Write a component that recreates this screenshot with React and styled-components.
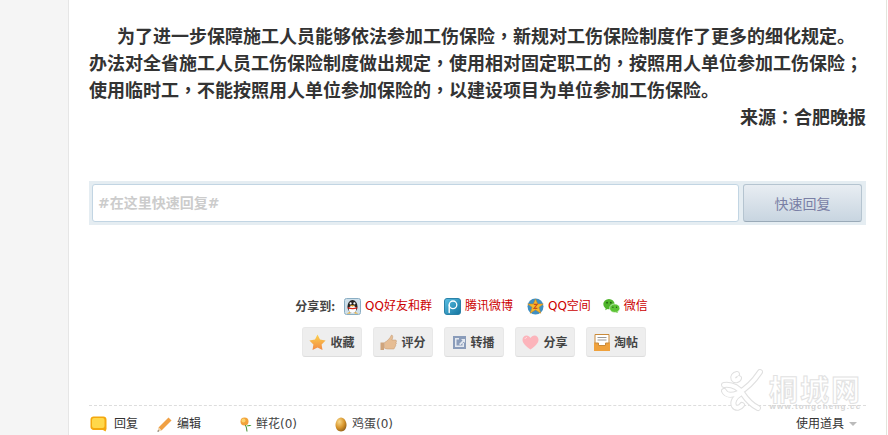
import React from "react";
import styled, { createGlobalStyle } from "styled-components";

const Global = createGlobalStyle`
  html, body { margin: 0; padding: 0; background: #fff; overflow: hidden; }
  body { font-family: "Liberation Sans", "Noto Sans CJK SC", sans-serif; }
`;
const Page = styled.div`
  position: relative; display: flex; width: 888px; height: 435px; overflow: hidden; background: #fff;
`;
const Side = styled.div`
  width: 68px; flex: none; background: #f5f5f5; border-right: 1px solid #e6e6e6;
`;
const Main = styled.div`
  width: 818px; flex: none; box-sizing: border-box; padding: 22px 20px 0 20px; border-right: 1px solid #e4e4dc;
`;
const Article = styled.div`
  font: bold 18px/27px "Noto Sans CJK SC", sans-serif; color: #333; height: 159px; white-space: nowrap;
`;
const Para = styled.p`
  margin: 0; text-indent: ${(p) => p.$indent || 0}px; text-align: ${(p) => p.$align || "left"};
`;
const Punct = styled.span`
  font-family: "Noto Sans CJK TC", sans-serif;
`;
const ReplyBox = styled.div`
  display: flex; gap: 4px; height: 44px; box-sizing: border-box; padding: 3px 4px 3px 3px; background: #e5edf2;
`;
const ReplyInput = styled.div`
  flex: 1; height: 38px; box-sizing: border-box; background: #fff; border: 1px solid #c2d5e3; border-radius: 3px;
  padding-left: 5px; font: bold 14px/36px "DejaVu Sans", "Noto Sans CJK SC", sans-serif; color: #ccc;
`;
const ReplyButton = styled.div`
  width: 119px; height: 38px; box-sizing: border-box; border: 1px solid #b5c4d0; border-bottom-color: #9aaab8; border-radius: 3px;
  background: linear-gradient(#e8edf2, #c8d5e0); text-align: center;
  font: 14px/36px "Noto Sans CJK SC", sans-serif; color: #7a7fa5;
`;
const ShareRow = styled.div`
  display: flex; justify-content: center; align-items: center; margin-top: 71px; height: 20px; padding-right: 12px;
  font: 12px/20px "DejaVu Sans", "Noto Sans CJK SC", sans-serif;
`;
const ShareLabel = styled.span`
  font-weight: bold; color: #444; margin-right: 9px; font-family: "Noto Sans CJK SC", sans-serif;
`;
const ShareLink = styled.span`
  display: inline-flex; align-items: center; gap: 4px; color: #c00; margin-right: ${(p) => p.$gap ?? 14}px;
`;
const Actions = styled.div`
  display: flex; justify-content: center; gap: 11px; margin-top: 11px; padding-right: 7px;
`;
const ActionBtn = styled.div`
  width: 60px; height: 30px; box-sizing: border-box; display: flex; align-items: center; justify-content: center; gap: 4px;
  background: #eee; border: 1px solid #e8e8e8; border-bottom-color: #ddd; border-radius: 3px;
  font: bold 12px/28px "Noto Sans CJK SC", sans-serif; color: #444;
`;
const Footer = styled.div`
  margin-top: 48px; border-top: 1px dashed #ddd; display: flex; align-items: center; height: 36px; padding-left: 1px;
  font: 12px/20px "DejaVu Sans", "Noto Sans CJK SC", sans-serif; color: #333;
`;
const FootItem = styled.span`
  display: inline-flex; align-items: center; gap: ${(p) => p.$gap ?? 3}px; width: ${(p) => p.$w}px; flex: none;
  color: ${(p) => p.$muted ? "#444" : "#333"};
`;
const Tools = styled.span`
  margin-left: auto; margin-right: 9px; display: inline-flex; align-items: center; gap: 5px; color: #333;
`;
const Caret = styled.i`
  width: 0; height: 0; border: 4px solid transparent; border-top-color: #bbb; border-bottom: 0;
`;
const Watermark = styled.div`
  position: absolute; left: 721px; top: 369px; width: 150px; height: 46px; display: flex; gap: 6px; pointer-events: none;
`;
const MarkText = styled.div`
  display: flex; flex-direction: column; align-items: center; margin-top: 4px;
`;
const MarkName = styled.span`
  font: bold 29px/30px "Noto Sans CJK SC", sans-serif; letter-spacing: 2px; color: #fff; -webkit-text-stroke: 1px #e2e2e2;
`;
const MarkUrl = styled.span`
  font: bold 8px/8px "Liberation Sans", sans-serif; letter-spacing: 1.200px; color: #d4d4d4;
`;

const Qq = () => (
  <svg width="17" height="17" viewBox="0 0 17 17">
    <rect x=".5" y=".5" width="16" height="16" rx="2" fill="#cfe0ea" stroke="#8aaec4" />
    <ellipse cx="8.500" cy="8.500" rx="5" ry="6.500" fill="#222" />
    <ellipse cx="8.500" cy="11.300" rx="3.600" ry="3.600" fill="#fff" />
    <circle cx="6.600" cy="5.400" r="1.100" fill="#fff" /><circle cx="10.400" cy="5.400" r="1.100" fill="#fff" />
    <path d="M5.600 7.200h5.800l-2.900 1.600z" fill="#f0a91e" />
    <path d="M3.800 9c3 1.200 6.400 1.200 9.400 0v1.500c-3 1-6.400 1-9.400 0z" fill="#d8261c" />
    <path d="M2.500 15.500l3.500-1.600.5 1.600zM14.500 15.500l-3.500-1.600-.5 1.600z" fill="#f0a91e" />
  </svg>
);
const Tqq = () => (
  <svg width="17" height="17" viewBox="0 0 17 17">
    <defs><linearGradient id="tq" x1="0" y1="0" x2="1" y2="1"><stop offset="0" stopColor="#5cc0e4" /><stop offset="1" stopColor="#12749f" /></linearGradient></defs>
    <rect width="16" height="16" x=".5" y=".5" rx="2.500" fill="url(#tq)" stroke="#2a82a8" />
    <circle cx="9" cy="6.800" r="3.800" fill="none" stroke="#fff" strokeWidth="1.300" />
    <path d="M5.200 14.500V7" stroke="#fff" strokeWidth="1.400" fill="none" strokeLinecap="round" />
  </svg>
);
const Zone = () => (
  <svg width="17" height="17" viewBox="0 0 17 17">
    <circle cx="8.500" cy="8.500" r="8" fill="#3f8fc2" />
    <path d="M8.500 1l2.200 5h5.600l-4.400 3.300 1.800 6-5.200-3.500-5.200 3.500 1.800-6L.7 6h5.600z" fill="#f6b92c" stroke="#d8860e" strokeWidth=".5" />
    <path d="M6.800 6.400h3.400L7 10.400h3.400" fill="none" stroke="#c9501a" strokeWidth="1.100" />
  </svg>
);
const Wechat = () => (
  <svg width="17" height="16" viewBox="0 0 18 16">
    <ellipse cx="6.300" cy="6" rx="6" ry="5.500" fill="#4fb52b" />
    <path d="M3 9.500l-.6 3 3-1.800z" fill="#4fb52b" />
    <ellipse cx="12.400" cy="10.300" rx="5.400" ry="4.500" fill="#5cc334" stroke="#fff" strokeWidth=".6" />
    <path d="M15 13.500l.8 2-2.600-1.200z" fill="#5cc334" />
    <circle cx="4.300" cy="4.500" r=".9" fill="#1d5a10" /><circle cx="8.300" cy="4.500" r=".9" fill="#1d5a10" />
    <circle cx="10.500" cy="9.300" r=".7" fill="#1d5a10" /><circle cx="14.300" cy="9.300" r=".7" fill="#1d5a10" />
  </svg>
);
const Star = () => (
  <svg width="17" height="16" viewBox="0 0 17 16">
    <defs><linearGradient id="st" x1="0" y1="0" x2="0" y2="1"><stop offset="0" stopColor="#fcd24e" /><stop offset="1" stopColor="#f28a44" /></linearGradient></defs>
    <path d="M8.500.5l2.500 5.100 5.600.8-4 4 .9 5.600-5-2.600-5 2.600.9-5.600-4-4 5.600-.8z" fill="url(#st)" />
  </svg>
);
const Thumb = () => (
  <svg width="17" height="17" viewBox="0 0 17 17">
    <path d="M.5 8.500H4v7.500H.5z" fill="#cfa47c" />
    <path d="M4.500 8.500c2.500-1.200 5.500-4 7-7.500 1.600.2 1.600 2.500.4 5h3.400c1.400 0 1.600 1.700.6 2.200.8.800.6 2-.4 2.400.5 1 .2 2-.8 2.300.2 1.200-.5 2.100-1.600 2.100H7.500c-1.300 0-2-.5-3-.8z" fill="#e6bd94" stroke="#c0956c" strokeWidth=".5" />
  </svg>
);
const Repost = () => (
  <svg width="13" height="13" viewBox="0 0 13 13">
    <path d="M0 0h13v13H0z" fill="#8a9cba" />
    <path d="M2 2h4v1.500H3.500v6h6V7H11v4H2z" fill="#e3e8ef" />
    <path d="M6 8l3.500-3.500L8 3h4v4l-1.200-1.200L7.300 9.200z" fill="#e3e8ef" />
  </svg>
);
const Heart = () => (
  <svg width="17" height="15" viewBox="0 0 17 15">
    <path d="M8.500 14.500C3.500 10.800.5 8 .5 4.700.5 2.200 2.400.5 4.500.5c1.700 0 3.100.9 4 2.400.9-1.500 2.300-2.400 4-2.400 2.100 0 4 1.700 4 4.200 0 3.300-3 6.100-8 9.800z" fill="#fcb4bb" />
    <path d="M3 4c.3-1 1-1.500 2-1.500" stroke="#fde4e6" strokeWidth="1" fill="none" />
  </svg>
);
const Inbox = () => (
  <svg width="16" height="17" viewBox="0 0 16 17">
    <path d="M0 8.500h16V17H0z" fill="#efa13c" />
    <path d="M1 .5h14v8.500h-3.500v2.500h-7V9H1z" fill="#fff" stroke="#c98a3a" />
    <path d="M3.500 3.500h9M3.500 6h9" stroke="#999" strokeWidth="1" />
  </svg>
);
const Bubble = () => (
  <svg width="17" height="17" viewBox="0 0 17 17">
    <path d="M3.500.5h10c1.600 0 3 1.300 3 3v9.500l-1 2.500-2.500-1.500H3.500c-1.600 0-3-1.400-3-3v-7.500c0-1.700 1.400-3 3-3z" fill="#f4a80e" />
    <rect x="2" y="2" width="12.500" height="10" rx="2" fill="#ffd84a" />
  </svg>
);
const Pencil = () => (
  <svg width="15" height="15" viewBox="0 0 15 15">
    <path d="M11.500.5l3 3L4.500 13.500l-3-3z" fill="#f0a044" />
    <path d="M1.500 10.500l3 3-4 1.200z" fill="#ecd2ac" />
    <path d="M.5 14.700l.5-1.700 1.200 1.200z" fill="#555" />
  </svg>
);
const Flower = () => (
  <svg width="12" height="15" viewBox="0 0 12 15">
    <circle cx="4.500" cy="4.500" r="4" fill="#f2a33a" />
    <circle cx="3.500" cy="3.500" r="2" fill="#fbd36c" />
    <path d="M5.500 8c.8 2 1.400 4 1.500 6.500" stroke="#3b8c2a" strokeWidth="1" fill="none" />
    <path d="M7 8.500c1.500-.8 3-.7 4.500-.2-1.200 1-2.800 1.200-4.500.9z" fill="#3b9c2a" />
  </svg>
);
const Egg = () => (
  <svg width="12" height="15" viewBox="0 0 12 15">
    <defs><radialGradient id="eg" cx=".35" cy=".3" r=".8"><stop offset="0" stopColor="#f8d88a" /><stop offset=".55" stopColor="#d8962c" /><stop offset="1" stopColor="#8a5a16" /></radialGradient></defs>
    <path d="M6 .5c3 0 5.500 3.700 5.500 7.500 0 3.700-2.400 6.500-5.500 6.500S.5 11.700.5 8C.5 4.200 3 .5 6 .5z" fill="url(#eg)" />
  </svg>
);
const markPaths = [
  "M16 5c-3 .5-4.500 3-3.500 5 1.200 2 4.500 1.500 5.500-.8",
  "M39 3C33 12 25 20 17 24 10 27 5 26 3 22",
  "M3 16c8-1 14 2 19 9 4 6 9 11 15 14",
  "M19 25c-5 3-8 8-6 12 2 3 6 2 8-1",
];
const MarkFigure = () => (
  <svg width="42" height="44" viewBox="0 0 42 44" fill="none" strokeLinecap="round">
    {markPaths.map((d) => <path key={d} d={d} stroke="#e0e0e0" strokeWidth="6" />)}
    {markPaths.map((d) => <path key={d} d={d} stroke="#fff" strokeWidth="4" />)}
  </svg>
);

const actions = [
  [<Star key="i" />, "收藏"], [<Thumb key="i" />, "评分"], [<Repost key="i" />, "转播"],
  [<Heart key="i" />, "分享"], [<Inbox key="i" />, "淘帖"],
];

export default function App() {
  return (
    <Page>
      <Global />
      <Side />
      <Main>
        <Article>
          <Para $indent={28}>为了进一步保障施工人员能够依法参加工伤保险<Punct>，</Punct>新规对工伤保险制度作了更多的细化规定。</Para>
          <Para>办法对全省施工人员工伤保险制度做出规定<Punct>，</Punct>使用相对固定职工的<Punct>，</Punct>按照用人单位参加工伤保险<Punct>；</Punct></Para>
          <Para>使用临时工<Punct>，</Punct>不能按照用人单位参加保险的<Punct>，</Punct>以建设项目为单位参加工伤保险。</Para>
          <Para $align="right">来源<Punct>：</Punct>合肥晚报</Para>
        </Article>
        <ReplyBox>
          <ReplyInput>#在这里快速回复#</ReplyInput>
          <ReplyButton>快速回复</ReplyButton>
        </ReplyBox>
        <ShareRow>
          <ShareLabel>分享到:</ShareLabel>
          <ShareLink $gap={12}><Qq />QQ好友和群</ShareLink>
          <ShareLink><Tqq />腾讯微博</ShareLink>
          <ShareLink $gap={12}><Zone />QQ空间</ShareLink>
          <ShareLink $gap={0}><Wechat />微信</ShareLink>
        </ShareRow>
        <Actions>
          {actions.map(([icon, label]) => (
            <ActionBtn key={label}>{icon}{label}</ActionBtn>
          ))}
        </Actions>
        <Footer>
          <FootItem $w={67} $gap={7}><Bubble />回复</FootItem>
          <FootItem $w={83} $gap={5}><Pencil />编辑</FootItem>
          <FootItem $w={95} $gap={4} $muted><Flower />鲜花(0)</FootItem>
          <FootItem $w={100} $gap={5} $muted><Egg />鸡蛋(0)</FootItem>
          <Tools>使用道具<Caret /></Tools>
        </Footer>
      </Main>
      <Watermark>
        <MarkFigure />
        <MarkText>
          <MarkName>桐城网</MarkName>
          <MarkUrl>www.tongcheng.cc</MarkUrl>
        </MarkText>
      </Watermark>
    </Page>
  );
}
